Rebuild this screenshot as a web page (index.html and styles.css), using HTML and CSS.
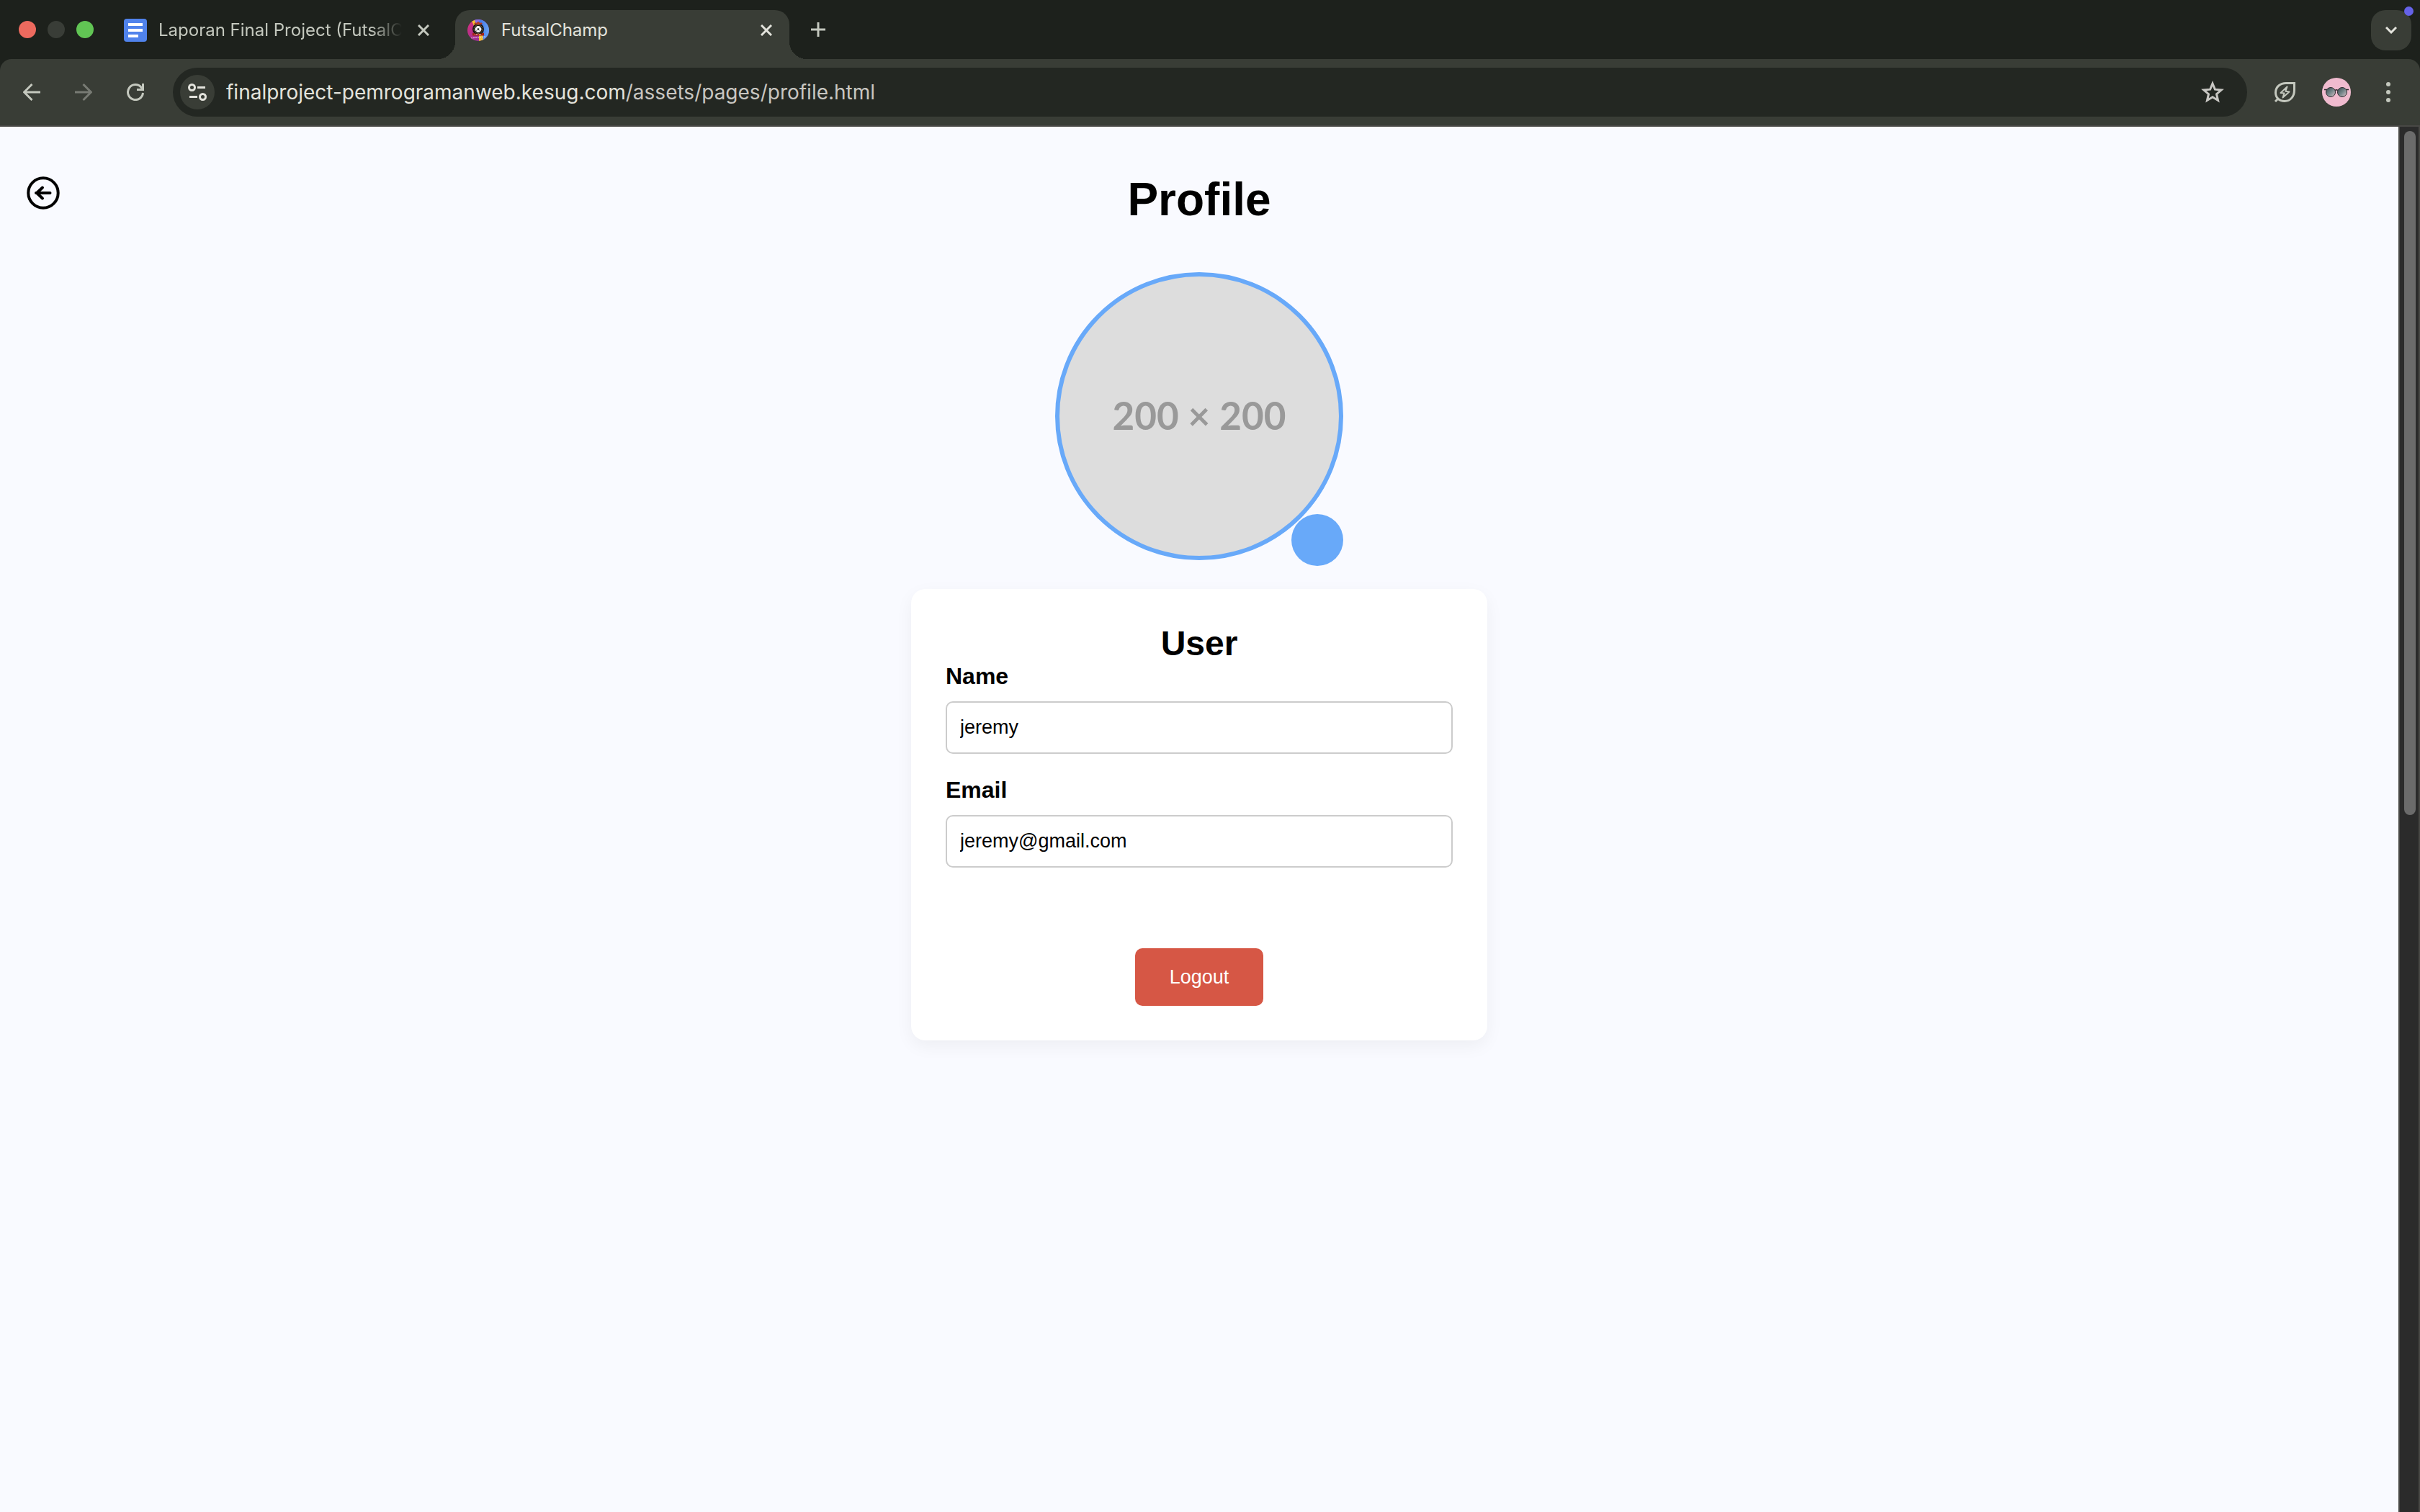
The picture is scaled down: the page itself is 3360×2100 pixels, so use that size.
FILE: index.html
```html
<!DOCTYPE html>
<html lang="en">
<head>
  <meta charset="utf-8">
  <title>FutsalChamp</title>
  <link rel="stylesheet" href="styles.css">
</head>
<body>
  <div class="browser">
    <div class="tab-strip">
      <div class="window-controls">
        <span class="light light-close"></span>
        <span class="light light-idle"></span>
        <span class="light light-zoom"></span>
      </div>
      <div class="tab">
        <svg class="favicon" viewBox="0 0 32 32" aria-hidden="true">
          <rect width="32" height="32" rx="4" fill="#5083ec"/>
          <path fill="#fff" d="M6 6h20v4H6zM6 14h20v4H6zM6 22h14v4H6z"/>
        </svg>
        <span class="tab-title tab-title-faded">Laporan Final Project (FutsalC</span>
        <button class="tab-close" aria-label="Close tab">
          <svg viewBox="0 0 16 16"><path d="M1 1l14 14M15 1L1 15"/></svg>
        </button>
      </div>
      <div class="tab tab-active">
        <svg class="favicon" viewBox="0 0 32 32" aria-hidden="true">
          <defs>
            <clipPath id="badge-clip"><circle cx="16" cy="16" r="15"/></clipPath>
            <linearGradient id="badge-left" x1="0" y1="0" x2="1" y2="1">
              <stop offset="0" stop-color="#e0307c"/><stop offset="1" stop-color="#7c2f9c"/>
            </linearGradient>
            <linearGradient id="badge-right" x1="0" y1="0" x2="1" y2="0">
              <stop offset="0" stop-color="#2f5fe0"/><stop offset="1" stop-color="#6aa8f2"/>
            </linearGradient>
          </defs>
          <g clip-path="url(#badge-clip)">
            <rect width="32" height="32" fill="url(#badge-left)"/>
            <path d="M12 0h20v32H22l-4-14z" fill="url(#badge-right)"/>
            <path d="M9 0h11l-6 8z" fill="#8a6be0"/>
            <path d="M7 3l4-1 3 9-3 1zM17 21l5-1 1 12h-6z" fill="#f3c12f"/>
            <circle cx="16" cy="14.500" r="8" fill="#15120f"/>
            <path d="M10 7l2-2 1 1 3-2 3 2 1-1 2 2-2 1h-8z" fill="#b33a24"/>
            <circle cx="16" cy="14.500" r="6" fill="none" stroke="#a8955c" stroke-dasharray="1 1"/>
            <circle cx="16" cy="14.500" r="4.500" fill="#f4f4f4"/>
            <path d="M16 13l1.500 1-.6 1.800h-1.800L14.500 14z" fill="#222"/>
            <path d="M12.500 12.500l1-1M19.500 12.500l-1-1M13 17.500l.8-1M19 17.500l-.8-1" stroke="#222"/>
            <path d="M8 19.500q8 3 16 0v4H8z" fill="#a32417"/>
            <path d="M11 21.500h10" stroke="#f3d9c9" stroke-dasharray="1 1"/>
            <path d="M6 27q10-1 20-2" fill="none" stroke="#f0d8f0" stroke-dasharray="2 1"/>
          </g>
        </svg>
        <span class="tab-title">FutsalChamp</span>
        <button class="tab-close" aria-label="Close tab">
          <svg viewBox="0 0 16 16"><path d="M1 1l14 14M15 1L1 15"/></svg>
        </button>
      </div>
      <button class="new-tab" aria-label="New tab">
        <svg viewBox="0 0 20 20"><path d="M10 0v20M0 10h20"/></svg>
      </button>
      <button class="tab-search" aria-label="Search tabs">
        <svg viewBox="0 0 16 10"><path d="M1 1l7 7 7-7"/></svg>
        <span class="notice-dot"></span>
      </button>
    </div>

    <div class="toolbar">
      <button class="tool" aria-label="Back">
        <svg viewBox="0 0 24 24"><path d="M24 12H2M12.500 1L1.500 12l11 11"/></svg>
      </button>
      <button class="tool tool-disabled" aria-label="Forward">
        <svg viewBox="0 0 24 24"><path d="M0 12h22M11.500 1l11 11-11 11"/></svg>
      </button>
      <button class="tool" aria-label="Reload">
        <svg viewBox="0 0 24 24"><path d="M22.500 13A10.500 10.500 0 1 1 20 5.200L22 8M22.500 0v8.500H14"/></svg>
      </button>
      <div class="address-bar">
        <button class="site-info" aria-label="View site information">
          <svg viewBox="0 0 26 24"><circle cx="5.500" cy="5.500" r="4"/><path d="M13 5.500h11M2 18.500h11"/><circle cx="20.500" cy="18.500" r="4"/></svg>
        </button>
        <div class="url" role="textbox" aria-label="Address">finalproject-pemrogramanweb.kesug.com<span class="url-path">/assets/pages/profile.html</span></div>
        <button class="bookmark" aria-label="Bookmark this tab">
          <svg viewBox="0 0 32 32"><path d="M16 4l3.400 8.200 8.800.7-6.700 5.800 2 8.700L16 22.700 8.500 27.400l2-8.700-6.700-5.800 8.800-.7z"/></svg>
        </button>
      </div>
      <button class="tool" aria-label="Energy saver">
        <svg class="leaf" viewBox="0 0 32 32"><path d="M29.500 3.500V13C29.500 22 24 28.500 16 28.500 8.500 28.500 3.500 23.500 3.500 16.500 3.500 8.500 10 3.500 18 3.500zM3 29l4.500-4.500"/><path class="bolt" d="M19.500 8.500L10.500 17l5 .5-2 6L22.500 15.500l-5.200-.7z"/></svg>
      </button>
      <button class="tool" aria-label="Account">
        <svg class="account" viewBox="0 0 40 40">
          <defs>
            <linearGradient id="lens" x1="0" y1="0" x2="1" y2="1">
              <stop offset="0" stop-color="#39444a"/><stop offset=".5" stop-color="#74868a"/><stop offset="1" stop-color="#d9c3c9"/>
            </linearGradient>
          </defs>
          <circle cx="20" cy="20" r="20" fill="#f0bbcf"/>
          <g fill="url(#lens)" stroke="#2c2a2e" stroke-width="1">
            <circle cx="12" cy="20" r="6.500"/><circle cx="28" cy="20" r="6.500"/>
            <path fill="none" stroke-width="1.500" d="M18 17.500q2-1.500 4 0M7 16.500H3M33 16.500h4"/>
          </g>
        </svg>
      </button>
      <button class="tool" aria-label="Menu">
        <svg class="dots" viewBox="0 0 6 28"><circle cx="3" cy="3" r="3"/><circle cx="3" cy="14" r="3"/><circle cx="3" cy="25" r="3"/></svg>
      </button>
    </div>

    <div class="viewport">
      <main class="page">
        <header class="page-header">
          <a class="back-link" href="#" aria-label="Back to home">
            <svg viewBox="0 0 48 48"><circle cx="24" cy="24" r="20.700"/><path d="M33.500 24H14M23 16.500L15 24l8 7.500"/></svg>
          </a>
          <h1 class="page-title">Profile</h1>
        </header>
        <div class="photo">
          <div class="photo-image">200 × 200</div>
          <button class="photo-edit" aria-label="Change photo"></button>
        </div>
        <form class="card">
          <h2 class="card-title">User</h2>
          <div class="field">
            <label for="name">Name</label>
            <input id="name" type="text" value="jeremy">
          </div>
          <div class="field">
            <label for="email">Email</label>
            <input id="email" type="email" value="jeremy@gmail.com">
          </div>
          <button class="logout" type="button">Logout</button>
        </form>
      </main>
      <div class="scrollbar"><div class="scroll-thumb"></div></div>
    </div>
  </div>
</body>
</html>
```
FILE: styles.css
```css
* {
  box-sizing: border-box;
}

body {
  margin: 0;
  font-family: "Liberation Sans", Arial, sans-serif;
  color: #000;
}

button {
  display: flex;
  align-items: center;
  justify-content: center;
  padding: 0;
  border: 0;
  background: none;
  font: inherit;
}

svg {
  display: block;
  flex: none;
}

h1,
h2 {
  margin: 0;
}

.browser {
  display: flex;
  flex-direction: column;
  min-height: 100vh;
  background: #1d211c;
}

/* Tab strip */

.tab-strip {
  display: flex;
  align-items: flex-end;
  height: 82px;
  padding: 0 12px 0 26px;
  font-family: Inter, "Noto Sans", sans-serif;
  font-size: 24px;
  line-height: 32px;
  color: #c4c8be;
}

.window-controls {
  display: flex;
  align-self: center;
  gap: 16px;
  width: 126px;
}

.light {
  width: 24px;
  height: 24px;
  border-radius: 50%;
}

.light-close {
  background: #ed6a5e;
}

.light-idle {
  background: #393d37;
}

.light-zoom {
  background: #61c554;
}

.tab {
  display: flex;
  align-items: center;
  width: 464px;
  height: 68px;
  padding: 0 20px 12px 16px;
  margin-left: 4px;
}

.tab:not(.tab-active) {
  margin-right: 12px;
}

.tab-active {
  position: relative;
  margin-left: 0;
  border-radius: 20px 20px 0 0;
  background: #393d36;
  color: #e3e3dc;
}

/* Concave feet joining the active tab to the toolbar */
.tab-active::before,
.tab-active::after {
  content: "";
  position: absolute;
  bottom: 0;
  width: 24px;
  height: 24px;
}

.tab-active::before {
  right: 100%;
  background: radial-gradient(circle at 0 0, transparent 24px, #393d36 24px);
}

.tab-active::after {
  left: 100%;
  background: radial-gradient(circle at 100% 0, transparent 24px, #393d36 24px);
}

.favicon {
  width: 32px;
  height: 32px;
}

.tab-title {
  flex: 1;
  margin: 0 4px 0 16px;
  white-space: nowrap;
}

.tab-title-faded {
  -webkit-mask-image: linear-gradient(to right, #000 84%, transparent 96%);
  mask-image: linear-gradient(to right, #000 84%, transparent 96%);
}

.tab-close {
  width: 24px;
  height: 24px;
  color: inherit;
}

.tab-close svg {
  width: 16px;
  height: 16px;
  fill: none;
  stroke: currentColor;
  stroke-width: 3;
}

.new-tab {
  align-self: center;
  width: 56px;
  height: 56px;
  margin-left: 12px;
}

.new-tab svg {
  width: 20px;
  height: 20px;
  stroke: #c4c8be;
  stroke-width: 3;
}

.tab-search {
  position: relative;
  width: 56px;
  height: 56px;
  margin: 0 0 12px auto;
  border-radius: 20px;
  background: #393d36;
}

.tab-search svg {
  width: 16px;
  height: 10px;
  fill: none;
  stroke: #e3e3dc;
  stroke-width: 3;
}

.notice-dot {
  position: absolute;
  top: -5px;
  right: -3px;
  width: 13px;
  height: 13px;
  border-radius: 50%;
  background: #6562e8;
}

/* Toolbar */

.toolbar {
  display: flex;
  align-items: center;
  height: 94px;
  padding: 0 8px;
  border-bottom: 2px solid #484845;
  border-radius: 16px 16px 0 0;
  background: #393d36;
}

.tool {
  width: 72px;
  height: 68px;
  color: #c4c8be;
}

.tool-disabled {
  color: #787b74;
}

.tool svg {
  width: 24px;
  height: 24px;
  fill: none;
  stroke: currentColor;
  stroke-width: 3;
}

.tool .leaf {
  width: 32px;
  height: 32px;
}

.tool .bolt {
  stroke-width: 2;
  stroke-linejoin: round;
}

.tool .account {
  width: 40px;
  height: 40px;
  stroke: none;
}

.tool .dots {
  width: 6px;
  height: 28px;
  fill: currentColor;
  stroke: none;
}

.address-bar {
  display: flex;
  flex: 1;
  align-items: center;
  height: 68px;
  margin: 0 16px;
  padding: 0 24px 0 10px;
  border-radius: 34px;
  background: #232722;
}

.site-info {
  width: 48px;
  height: 48px;
  border-radius: 50%;
  background: #393d36;
}

.site-info svg {
  width: 26px;
  height: 24px;
  fill: none;
  stroke: #e3e3dc;
  stroke-width: 3;
}

.url {
  flex: 1;
  margin-left: 16px;
  font-family: Inter, "Noto Sans", sans-serif;
  font-size: 28px;
  line-height: 36px;
  white-space: nowrap;
  color: #e3e3dc;
}

.url-path {
  color: #c8c6c1;
}

.bookmark svg {
  width: 48px;
  height: 32px;
  fill: none;
  stroke: #c8c7c3;
  stroke-width: 3;
}

/* Page */

.viewport {
  display: flex;
  flex: 1;
}

.page {
  display: flex;
  flex: 1;
  flex-direction: column;
  align-items: center;
  padding: 64px 0;
  background: #f9faff;
}

.page-header {
  display: grid;
  grid-template-columns: 1fr auto 1fr;
  align-items: start;
  width: 100%;
  padding: 0 36px;
  margin-bottom: 64px;
}

.back-link {
  justify-self: start;
  padding: 4px 0;
}

.back-link svg {
  width: 48px;
  height: 48px;
  fill: none;
  stroke: #000;
  stroke-width: 4;
  stroke-linecap: round;
  stroke-linejoin: round;
}

.page-title {
  font-size: 64px;
  line-height: 74px;
}

.photo {
  position: relative;
  padding-bottom: 8px;
  margin-bottom: 32px;
}

.photo-image {
  display: flex;
  align-items: center;
  justify-content: center;
  width: 400px;
  height: 400px;
  padding-bottom: 4px;
  border: 6px solid #68a9f9;
  border-radius: 50%;
  background: #ddd;
  font-family: Lato, sans-serif;
  font-size: 53px;
  font-weight: 700;
  color: #999;
}

.photo-edit {
  position: absolute;
  right: 0;
  bottom: 0;
  width: 72px;
  height: 72px;
  border-radius: 50%;
  background: #68a9f9;
}

.card {
  display: flex;
  flex-direction: column;
  width: 800px;
  max-width: 100%;
  padding: 48px;
  border-radius: 20px;
  background: #fff;
  box-shadow: 0 8px 24px rgba(0, 0, 0, 0.05);
}

.card-title {
  font-size: 48px;
  line-height: 55px;
  text-align: center;
}

.field {
  display: flex;
  flex-direction: column;
  gap: 16px;
  margin-bottom: 32px;
}

.field label {
  font-size: 32px;
  font-weight: 700;
  line-height: 37px;
}

.field input {
  width: 100%;
  height: 73px;
  padding: 0 18px;
  border: 2px solid #ccc;
  border-radius: 10px;
  background: #fff;
  font-family: inherit;
  font-size: 27px;
  color: #000;
}

.logout {
  align-self: center;
  height: 80px;
  padding: 0 48px;
  margin-top: 80px;
  border-radius: 10px;
  background: #d65745;
  font-size: 27px;
  color: #fff;
}

/* Scrollbar */

.scrollbar {
  width: 30px;
  padding: 6px 4px 6px 6px;
  border: solid #484845;
  border-width: 0 2px;
  background: #2b2b2b;
}

.scroll-thumb {
  width: 16px;
  height: 950px;
  border-radius: 8px;
  background: #6b6b6b;
}
```
